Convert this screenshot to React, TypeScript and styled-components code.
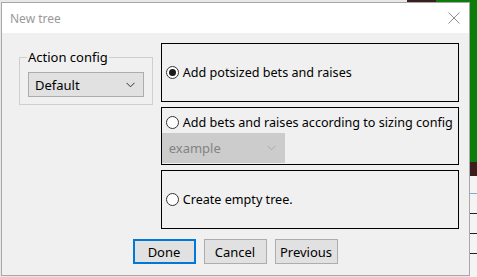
import React from 'react'
import styled, { createGlobalStyle } from 'styled-components'

const GlobalStyle = createGlobalStyle`
  html, body {
    margin: 0;
    padding: 0;
    width: 477px;
    height: 277px;
    overflow: hidden;
    background: #e6e6e6;
    font-family: 'Segoe UI', 'Noto Sans', sans-serif;
  }
`

interface RadioProps {
  checked?: boolean
  label: string
}

const RadioOption = ({ checked, label }: RadioProps) => (
  <RadioRow>
    <RadioCircle checked={checked} />
    <span>{label}</span>
  </RadioRow>
)

const Chevron = ({ color }: { color: string }) => (
  <svg width="9" height="6" viewBox="0 0 9 6">
    <path d="M0.5 0.8 L4.5 4.8 L8.5 0.8" fill="none" stroke={color} strokeWidth="1" />
  </svg>
)

const App = () => (
  <Desktop>
    <GlobalStyle />
    <BrownTop />
    <GreenSide />
    <BrownSide />
    <SideLines>
      <i />
      <i />
      <i />
      <i />
    </SideLines>
    <Dialog>
      <TitleBar>
        <Title>New tree</Title>
        <CloseIcon viewBox="0 0 12 12">
          <path d="M0.5 0.5 L11.5 11.5 M11.5 0.5 L0.5 11.5" stroke="#8a8a8a" strokeWidth="1" />
        </CloseIcon>
      </TitleBar>
      <Body>
        <Columns>
          <GroupBox>
            <Legend>Action config</Legend>
            <Combo>
              <span>Default</span>
              <Chevron color="#333" />
            </Combo>
          </GroupBox>
          <Options>
            <Panel>
              <RadioOption checked label="Add potsized bets and raises" />
            </Panel>
            <Panel compact>
              <RadioOption label="Add bets and raises according to sizing config" />
              <Combo disabled>
                <span>example</span>
                <Chevron color="#a8a8a8" />
              </Combo>
            </Panel>
            <Panel>
              <RadioOption label="Create empty tree." />
            </Panel>
          </Options>
        </Columns>
        <Buttons>
          <Button primary>Done</Button>
          <Button>Cancel</Button>
          <Button>Previous</Button>
        </Buttons>
      </Body>
    </Dialog>
  </Desktop>
)

export default App

const Desktop = styled.div`
  position: relative;
  width: 477px;
  height: 277px;
  background: #e8e8e8;
`

const BrownTop = styled.div`
  position: absolute;
  left: 407px;
  top: 0;
  width: 29px;
  height: 3px;
  background: #3c1e1e;
`

const GreenSide = styled.div`
  position: absolute;
  left: 436px;
  top: 0;
  width: 41px;
  height: 163px;
  background: #0b7d0b;
`

const BrownSide = styled.div`
  position: absolute;
  left: 470px;
  top: 162px;
  width: 7px;
  height: 14px;
  background: #3c1e1e;
`

const SideLines = styled.div`
  position: absolute;
  left: 470px;
  top: 176px;
  width: 7px;
  height: 101px;
  background: #f4f4f4;
  i {
    display: block;
    height: 1px;
    background: #222;
    margin-top: 19px;
  }
  i:first-child {
    background: #8aa8c8;
    margin-top: 17px;
  }
`

const Dialog = styled.div`
  position: absolute;
  left: 1px;
  top: 2px;
  width: 469px;
  height: 274px;
  box-sizing: border-box;
  border: 1px solid #a8a8a8;
  background: #f0f0f0;
  display: flex;
  flex-direction: column;
`

const TitleBar = styled.div`
  height: 30px;
  background: #ffffff;
  display: flex;
  align-items: center;
  justify-content: space-between;
  padding: 0 9px 0 8px;
`

const Title = styled.span`
  font-size: 12px;
  color: #999999;
`

const CloseIcon = styled.svg`
  width: 12px;
  height: 12px;
`

const Body = styled.div`
  flex: 1;
  display: flex;
  flex-direction: column;
  padding: 10px 10px 0 17px;
  font-size: 12px;
  color: #000;
`

const Columns = styled.div`
  display: flex;
  gap: 8px;
`

const GroupBox = styled.fieldset`
  margin: 8px 0 0 0;
  padding: 8px 7px 7px 8px;
  width: 134px;
  box-sizing: border-box;
  border: 1px solid #cfcfcf;
  align-self: flex-start;
`

const Legend = styled.legend`
  font-size: 13px;
  padding: 0 1px;
  margin-left: -1px;
  line-height: 13px;
`

const Combo = styled.div<{ disabled?: boolean }>`
  display: flex;
  align-items: center;
  justify-content: space-between;
  box-sizing: border-box;
  height: ${p => (p.disabled ? '30px' : '25px')};
  width: ${p => (p.disabled ? '123px' : '116px')};
  padding: 0 8px 0 6px;
  background: ${p => (p.disabled ? '#cccccc' : '#e1e1e1')};
  border: 1px solid ${p => (p.disabled ? '#cccccc' : '#adadad')};
  color: ${p => (p.disabled ? '#838383' : '#000')};
  font-size: 13px;
`

const Options = styled.div`
  display: flex;
  flex-direction: column;
  gap: 5px;
  width: 299px;
`

const Panel = styled.div<{ compact?: boolean }>`
  box-sizing: border-box;
  height: ${p => (p.compact ? '58px' : '59px')};
  border: 1px solid #000;
  display: flex;
  flex-direction: column;
  justify-content: ${p => (p.compact ? 'flex-start' : 'center')};
  padding: ${p => (p.compact ? '3px 0 0 0' : '0')};
`

const RadioRow = styled.label`
  display: flex;
  align-items: center;
  gap: 4px;
  padding-left: 4px;
  font-size: 12.6px;
  height: 22px;
  white-space: nowrap;
`

const RadioCircle = styled.span<{ checked?: boolean }>`
  flex: none;
  width: 13px;
  height: 13px;
  box-sizing: border-box;
  border-radius: 50%;
  border: 1px solid #333;
  background: #fff;
  display: flex;
  align-items: center;
  justify-content: center;
  &::after {
    content: '';
    width: 7px;
    height: 7px;
    border-radius: 50%;
    background: #1a1a1a;
    display: ${p => (p.checked ? 'block' : 'none')};
  }
`

const Buttons = styled.div`
  display: flex;
  justify-content: center;
  gap: 8px;
  margin: 10px 0 0 -8px;
`

const Button = styled.button<{ primary?: boolean }>`
  box-sizing: border-box;
  width: 63px;
  height: 25px;
  font-family: inherit;
  font-size: 13px;
  color: #000;
  background: #e1e1e1;
  border: ${p => (p.primary ? '2px solid #0078d7' : '1px solid #adadad')};
  padding: 0;
`
